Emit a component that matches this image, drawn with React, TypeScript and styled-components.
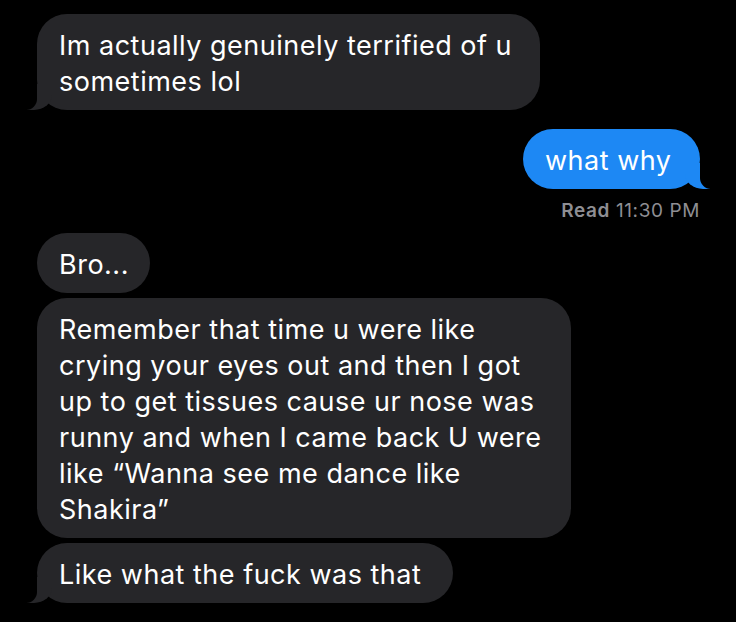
import { FC, ReactNode } from 'react'
import styled, { createGlobalStyle } from 'styled-components'

const GlobalStyle = createGlobalStyle`
  html, body {
    margin: 0;
    padding: 0;
    background-color: #000;
  }
`

type BubbleProps = {
  from: 'me' | 'them'
  width: number
  tail?: boolean
  children: ReactNode
}

const Bubble: FC<BubbleProps> = (props) => {
  const { from, width, tail, children } = props
  return (
    <BubbleBox $from={from} $width={width} $tail={!!tail}>
      {children}
    </BubbleBox>
  )
}

export default function App() {
  return (
    <>
      <GlobalStyle />
      <Thread>
        <Bubble from='them' width={503} tail>
          Im actually genuinely terrified of u<br />
          sometimes lol
        </Bubble>

        <Bubble from='me' width={177} tail>
          what why
        </Bubble>
        <ReadReceipt>
          <b>Read</b> 11:30 PM
        </ReadReceipt>

        <Group>
          <Bubble from='them' width={113}>
            Bro...
          </Bubble>
          <Bubble from='them' width={534}>
            Remember that time u were like<br />
            crying your eyes out and then I got<br />
            up to get tissues cause ur nose was<br />
            runny and when I came back U were<br />
            like “Wanna see me dance like<br />
            Shakira”
          </Bubble>
          <Bubble from='them' width={416} tail>
            Like what the fuck was that
          </Bubble>
        </Group>
      </Thread>
    </>
  )
}

const Thread = styled.div`
  width: 736px;
  height: 622px;
  box-sizing: border-box;
  padding: 14px 36px 0 37px;
  display: flex;
  flex-direction: column;
  overflow: hidden;

  background-color: #000;
  font-family: Inter, 'Noto Sans', sans-serif;
  -webkit-font-smoothing: antialiased;
`

const Group = styled.div`
  display: flex;
  flex-direction: column;
  gap: 5px;
  margin-top: 11px;
`

const BubbleBox = styled.div<{ $from: 'me' | 'them'; $width: number; $tail: boolean }>`
  position: relative;
  box-sizing: border-box;
  width: ${(p) => p.$width}px;
  padding: 14px 0 10px 22px;
  border-radius: 30px;
  align-self: ${(p) => (p.$from === 'me' ? 'flex-end' : 'flex-start')};
  margin-top: ${(p) => (p.$from === 'me' ? '19px' : '0')};

  font-size: 27px;
  line-height: 36px;
  letter-spacing: 0.5px;
  white-space: nowrap;
  color: #fff;
  background-color: ${(p) => (p.$from === 'me' ? '#1d88f4' : '#262629')};

  &::before,
  &::after {
    content: '';
    display: ${(p) => (p.$tail ? 'block' : 'none')};
    position: absolute;
    bottom: 0;
  }

  &::before {
    ${(p) => (p.$from === 'me' ? 'right: -10px;' : 'left: -10px;')}
    width: 25px;
    height: 26px;
    background-color: ${(p) => (p.$from === 'me' ? '#1d88f4' : '#262629')};
    ${(p) =>
      p.$from === 'me'
        ? 'border-bottom-left-radius: 18px 15px;'
        : 'border-bottom-right-radius: 18px 15px;'}
  }

  &::after {
    ${(p) => (p.$from === 'me' ? 'right: -14px;' : 'left: -14px;')}
    width: 14px;
    height: 26px;
    background-color: #000;
    ${(p) =>
      p.$from === 'me'
        ? 'border-bottom-left-radius: 11px;'
        : 'border-bottom-right-radius: 11px;'}
  }
`

const ReadReceipt = styled.div`
  align-self: flex-end;
  margin-top: 11px;
  font-size: 19px;
  line-height: 22px;
  letter-spacing: 0.6px;
  color: #8e8e93;

  b {
    font-weight: 600;
  }
`
